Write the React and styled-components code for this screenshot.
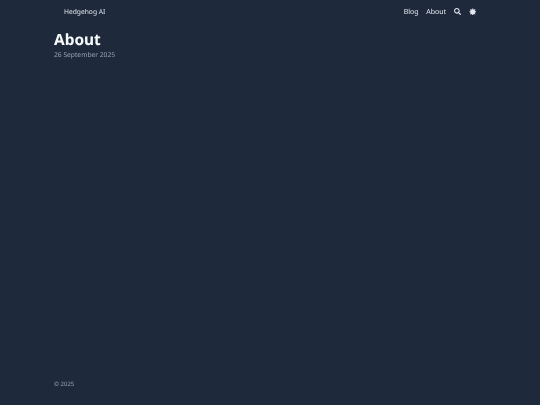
import React from 'react';
import styled, { createGlobalStyle } from 'styled-components';
import { FaSearch } from 'react-icons/fa';

const Global = createGlobalStyle`
  html, body {
    margin: 0;
    background: #1e293b;
  }
  body {
    font-family: "Noto Sans", sans-serif;
    text-rendering: geometricPrecision;
  }
`;

const Page = styled.div`
  height: 405px;
  display: flex;
  flex-direction: column;
  padding: 0 54px;
  box-sizing: border-box;
  overflow: hidden;
  will-change: transform;
`;

const Header = styled.header`
  height: 23px;
  display: flex;
  align-items: center;
  justify-content: space-between;
  padding: 0 10px;
`;

const Brand = styled.div`
  font-size: 6.7px;
  line-height: 10px;
  color: #e2e8f0;
`;

const Nav = styled.nav`
  display: flex;
  align-items: center;
  gap: 7.7px;
`;

const NavLink = styled.a`
  display: block;
  padding-top: 2px;
  font-size: 7px;
  line-height: 10px;
  color: #e2e8f0;
`;

const IconButton = styled.span`
  display: flex;
  color: #e2e8f0;
`;

const Main = styled.main`
  flex: 1;
  padding-top: 6px;
`;

const Title = styled.h1`
  margin: 0;
  font-size: 15.4px;
  line-height: 21px;
  font-weight: 700;
  color: #f8fafc;
`;

const DateLine = styled.div`
  font-size: 6.7px;
  line-height: 10px;
  color: #94a3b8;
`;

const Footer = styled.footer`
  height: 25px;
  font-size: 6px;
  color: #94a3b8;
`;

function SunIcon() {
  return (
    <svg width="7.5" height="7.5" viewBox="0 0 16 16" fill="currentColor">
      <circle cx="8" cy="8" r="5.5" />
      <path d="M8 0l1.6 3H6.4zM8 16l-1.6-3h3.2zM0 8l3-1.6v3.2zM16 8l-3 1.6V6.4zM2.3 2.3l3.2 1-2.2 2.2zM13.7 13.7l-3.2-1 2.2-2.2zM13.7 2.3l-1 3.2-2.2-2.2zM2.3 13.7l1-3.2 2.2 2.2z" />
    </svg>
  );
}

export default function App() {
  return (
    <Page>
      <Global />
      <Header>
        <Brand>Hedgehog AI</Brand>
        <Nav>
          <NavLink>Blog</NavLink>
          <NavLink>About</NavLink>
          <IconButton><FaSearch size={7} /></IconButton>
          <IconButton><SunIcon /></IconButton>
        </Nav>
      </Header>
      <Main>
        <Title>About</Title>
        <DateLine>26 September 2025</DateLine>
      </Main>
      <Footer>© 2025</Footer>
    </Page>
  );
}
